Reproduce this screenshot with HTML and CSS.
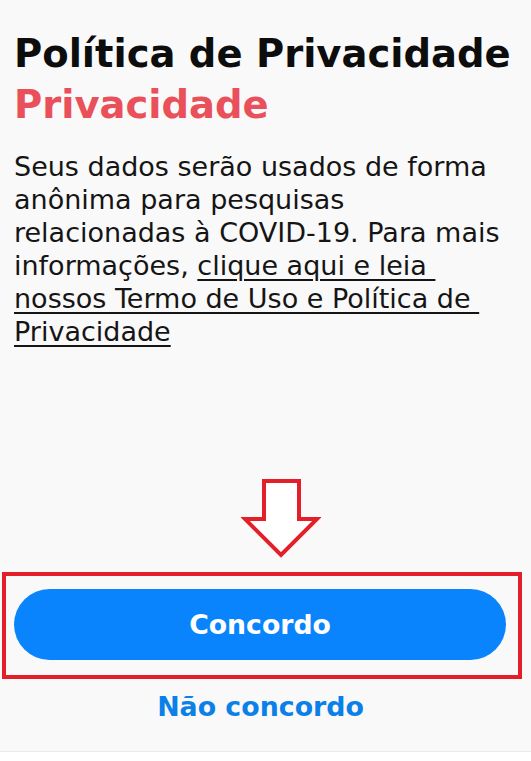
FILE: index.html
```html
<!DOCTYPE html>
<html lang="pt-BR">
<head>
<meta charset="utf-8">
<title>Política de Privacidade</title>
<link rel="stylesheet" href="styles.css">
</head>
<body>
<main class="screen">
  <h1 class="title">Política de Privacidade<br><span class="title-accent">Privacidade</span></h1>
  <p class="text">Seus dados serão usados de forma<br>anônima para pesquisas<br>relacionadas à COVID-19. Para mais<br>informações, <a class="link" href="#">clique aqui e leia&nbsp;<br>nossos Termo de Uso e Política de&nbsp;<br>Privacidade</a></p>
  <div class="arrow-wrap">
    <svg class="arrow" width="80" height="82" viewBox="0 0 80 82" aria-hidden="true">
      <polygon points="23,4 58,4 58,42 76,42 40,78 4,42 23,42" fill="#ffffff" stroke="#e3202a" stroke-width="4" stroke-linejoin="miter"/>
    </svg>
  </div>
  <div class="highlight">
    <button class="btn-primary" type="button">Concordo</button>
  </div>
  <a class="btn-link" href="#">Não concordo</a>
</main>
</body>
</html>
```

FILE: styles.css
```css
html, body {
  margin: 0;
  padding: 0;
  background: #ffffff;
}

.screen {
  box-sizing: border-box;
  height: 752px;
  background: #f9f9f9;
  border-bottom: 1px solid #ececec;
  display: flex;
  flex-direction: column;
  font-family: "DejaVu Sans", "Liberation Sans", sans-serif;
}

.title {
  margin: 28px 0 0 14px;
  font-size: 38.5px;
  line-height: 51px;
  font-weight: 700;
  color: #0d0d0d;
  white-space: nowrap;
}

.title-accent {
  color: #e9505a;
}

.text {
  margin: 20px 0 0 14px;
  font-size: 27px;
  line-height: 33px;
  color: #151515;
  white-space: nowrap;
}

.link {
  color: #151515;
  text-decoration: underline;
  text-decoration-thickness: 2px;
  text-underline-offset: 4px;
}

.arrow-wrap {
  display: flex;
  margin-top: 129px;
  padding-left: 241px;
}

.arrow {
  display: block;
}

.highlight {
  box-sizing: border-box;
  width: 520px;
  margin: 13px 0 0 2px;
  border: 4px solid #e3202a;
  padding: 13px 12px 15px 8px;
}

.btn-primary {
  display: block;
  width: 100%;
  height: 71px;
  border: none;
  border-radius: 36px;
  background: #0a84fc;
  color: #ffffff;
  font-family: "DejaVu Sans", "Liberation Sans", sans-serif;
  font-size: 26.7px;
  font-weight: 700;
  padding: 0;
}

.btn-link {
  align-self: center;
  margin-top: 11px;
  margin-right: 10px;
  font-size: 26.8px;
  line-height: 34px;
  font-weight: 700;
  color: #0a80e8;
  text-decoration: none;
}
```
